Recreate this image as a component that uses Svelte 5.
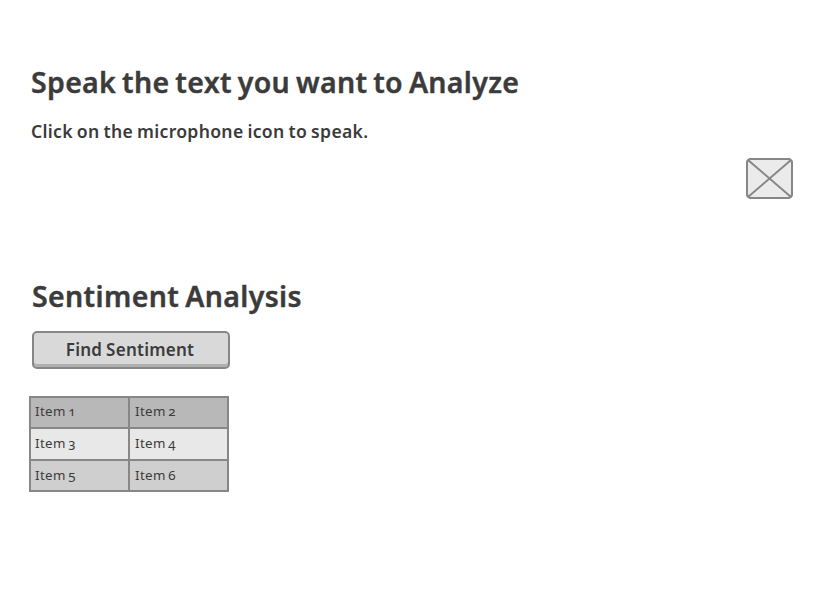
<script>
  const rows = [
    ['Item 1', 'Item 2'],
    ['Item 3', 'Item 4'],
    ['Item 5', 'Item 6'],
  ];
</script>

<main>
  <section class="speak">
    <h1>Speak the text you want to Analyze</h1>
    <p>Click on the microphone icon to speak.</p>
    <svg class="picture" width="48" height="42" viewBox="0 0 48 42" role="img" aria-label="Microphone">
      <rect x="2" y="2" width="45" height="39" rx="4" fill="#ebebeb" />
      <path d="M3 3 46 40M46 3 3 40" />
      <rect x="2" y="2" width="45" height="39" rx="4" fill="none" />
    </svg>
  </section>

  <section class="sentiment">
    <h2>Sentiment Analysis</h2>
    <button>Find Sentiment</button>
    <table>
      <tbody>
        {#each rows as row}
          <tr>
            {#each row as cell}
              <td>{cell}</td>
            {/each}
          </tr>
        {/each}
      </tbody>
    </table>
  </section>
</main>

<style>
  :global(body) { background: #fff; }
  main {
    box-sizing: border-box;
    width: 814px;
    height: 600px;
    padding: 61px 21px 0 31px;
    overflow: hidden;
    color: #3b3b3b;
    font-family: 'Noto Sans', sans-serif;
  }
  section { display: flex; flex-direction: column; align-items: flex-start; }
  .speak { height: 214px; }
  h1, h2, p { margin: 0; font-weight: 600; white-space: nowrap; }
  h1, h2 {
    font-size: 28.5px;
    line-height: 42px;
    letter-spacing: 0.31px;
    word-spacing: -1.8px;
    -webkit-text-stroke: 0.4px #3b3b3b;
  }
  h2 { margin-left: 1px; letter-spacing: 0.36px; }
  p { margin-top: 14px; font-size: 17.6px; line-height: 28px; letter-spacing: 0.3px; word-spacing: -0.9px; }
  .picture { align-self: flex-end; margin-top: 12px; stroke: #878787; stroke-width: 2; }
  button {
    box-sizing: border-box;
    width: 198px;
    height: 38px;
    margin: 14px 0 0 1px;
    padding: 0 2px 0 0;
    border: 2px solid #878787;
    border-radius: 5px;
    background: #d9d9d9;
    box-shadow: inset 0 -3px #b0b0b0;
    color: inherit;
    font: 600 17px/32px 'Noto Sans', sans-serif;
    letter-spacing: 0.25px;
    word-spacing: -0.8px;
  }
  table {
    width: 200px;
    margin: 27px 0 0 -2px;
    border-collapse: collapse;
    table-layout: fixed;
    font-size: 13.3px;
    line-height: 20px;
    font-variant-numeric: oldstyle-nums;
    letter-spacing: 0.4px;
    word-spacing: -1.5px;
  }
  td { box-sizing: border-box; height: 32px; padding: 0 0 2px 4px; border: 2px solid #878787; }
  td + td { padding-left: 5px; }
  tr:nth-child(1) { background: #b8b8b8; }
  tr:nth-child(2) { background: #e8e8e8; }
  tr:nth-child(3) { background: #cfcfcf; }
  tr:nth-child(1) td, tr:nth-child(3) td { height: 31px; }
  tr:nth-child(1) td { padding-bottom: 3px; }
</style>
